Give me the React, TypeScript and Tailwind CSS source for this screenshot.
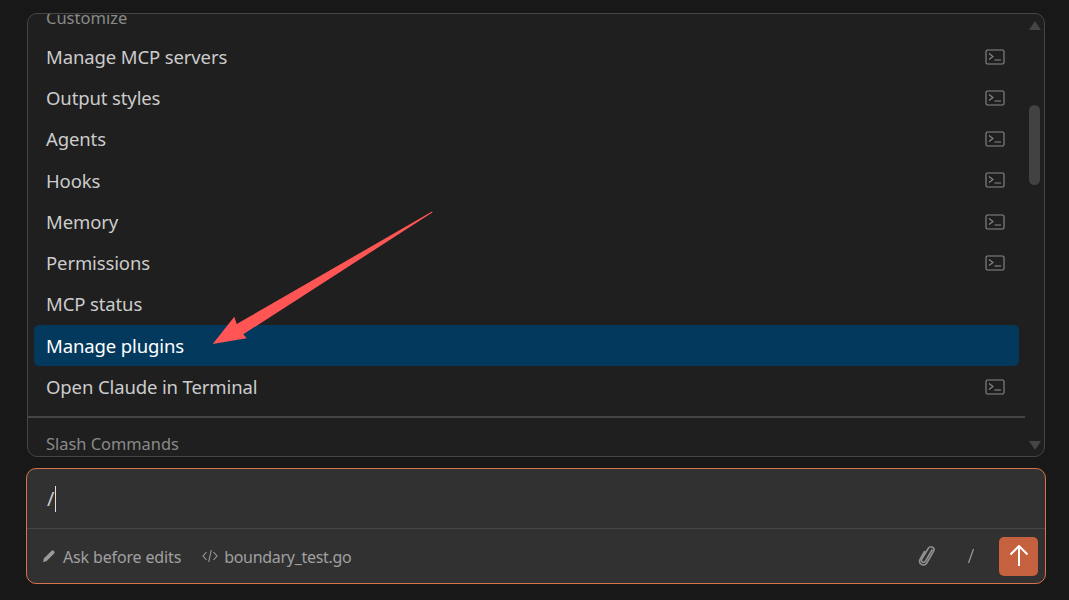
const items = [
  { label: "Manage MCP servers", icon: true },
  { label: "Output styles", icon: true },
  { label: "Agents", icon: true },
  { label: "Hooks", icon: true },
  { label: "Memory", icon: true },
  { label: "Permissions", icon: true },
  { label: "MCP status", icon: false },
  { label: "Manage plugins", icon: false, active: true },
  { label: "Open Claude in Terminal", icon: true },
];

function TerminalIcon() {
  return (
    <svg className="-mt-px" width="20" height="16" viewBox="0 0 20 16" fill="none" stroke="#8a8a8a" strokeWidth="1.1">
      <rect x="1" y="1" width="18" height="14" rx="1.5" />
      <path d="M4 4.5 L8 7.5 L4 10.5" />
      <path d="M9.5 11 H16" />
    </svg>
  );
}

export default function App() {
  return (
    <div className="relative h-[600px] w-[1069px] overflow-hidden bg-[#181818] font-['Noto_Sans',sans-serif] pt-[13px] pl-[27px]">
      <div className="relative h-[444px] w-[1018px] overflow-hidden rounded-[10px] border border-[#454545] bg-[#1f1f1f]">
        <div className="-mt-[9px] pl-[18px] text-[16.5px] leading-[26px] text-[#8a8a8a]">Customize</div>
        <div className="mt-[5.6px] ml-[6px] w-[985px]">
          {items.map((item) => (
            <div
              key={item.label}
              className={
                item.active
                  ? "mb-[0.25px] flex h-[41px] items-center justify-between rounded-[5px] bg-[#04395e] pl-3 pr-[14px] text-[18.5px] tracking-[-0.12px] text-white"
                  : "flex h-[41.25px] items-center justify-between pl-3 pr-[14px] text-[18.5px] tracking-[-0.12px] text-[#cccccc]"
              }
            >
              <span className={item.active ? "" : "-mt-px"}>{item.label}</span>
              {item.icon && <TerminalIcon />}
            </div>
          ))}
        </div>
        <div className="mt-[8px] h-[2px] w-[997px] bg-[#454545]" />
        <div className="mt-[13px] pl-[18px] text-[16.4px] leading-[26px] text-[#8a8a8a]">Slash Commands</div>
        <div className="absolute right-[3px] top-[7px] h-0 w-0 border-x-[6.5px] border-b-[9px] border-x-transparent border-b-[#454545]" />
        <div className="absolute right-[4px] top-[91px] h-[80px] w-[11px] rounded-full bg-[#424242]" />
        <div className="absolute right-[3px] bottom-[6px] h-0 w-0 border-x-[6.5px] border-t-[9px] border-x-transparent border-t-[#454545]" />
      </div>

      <div className="mt-[11px] -ml-px h-[116px] w-[1020px] rounded-[10px] border border-[#d9734e] bg-[#313131]">
        <div className="flex h-[60px] items-center border-b border-[#484848] pl-[20px]">
          <span className="text-[20px] text-[#cccccc]">/</span>
          <span className="ml-px h-[26px] w-px bg-[#e0e0e0]" />
        </div>
        <div className="flex h-[54px] items-center justify-between pl-[15px] pr-[7px]">
          <div className="flex items-center text-[16px] text-[#a0a0a0]">
            <svg width="14" height="14" viewBox="0 0 14 14" fill="#9a9a9a">
              <path d="M1 13 L1.8 9.6 L9.6 1.8 Q10.6 0.9 11.6 1.8 L12.3 2.5 Q13.1 3.5 12.2 4.4 L4.4 12.2 Z" />
            </svg>
            <span className="mt-[1px] ml-[7px] tracking-[-0.15px]">Ask before edits</span>
            <svg className="ml-[21px]" width="16" height="14" viewBox="0 0 16 14" fill="none" stroke="#9a9a9a" strokeWidth="1.1">
              <path d="M4.5 3 L1 7 L4.5 11" />
              <path d="M11.5 3 L15 7 L11.5 11" />
              <path d="M9.3 1 L6.7 13" />
            </svg>
            <span className="mt-[1px] ml-[6px] tracking-[-0.3px]">boundary_test.go</span>
          </div>
          <div className="flex items-center">
            <svg width="18" height="22" viewBox="0 0 18 22" fill="none" stroke="#8f8f8f" strokeWidth="1.6" strokeLinecap="round">
              <path d="M14 5 L7.5 16 Q6.3 18 4.5 17 Q2.8 16 3.8 14 L10.5 3 Q12 1 14.5 2.2 Q17 3.7 15.6 6.2 L8.8 18 Q7 21 3.8 19.6 Q0.4 17.8 2 14.4 L6.5 6.5" />
            </svg>
            <svg className="ml-[31px]" width="8" height="16" viewBox="0 0 8 16" fill="none" stroke="#9a9a9a" strokeWidth="1.2">
              <path d="M6.5 1 L1.5 15" />
            </svg>
            <div className="ml-[24px] flex h-[39px] w-[39px] items-center justify-center rounded-[5px] bg-[#c6613f]">
              <svg width="22" height="22" viewBox="0 0 22 22" fill="none" stroke="#ffffff" strokeWidth="2">
                <path d="M11 1 V21" />
                <path d="M2.5 9.5 L11 1 L19.5 9.5" />
              </svg>
            </div>
          </div>
        </div>
      </div>

      <svg className="absolute left-0 top-0" width="1069" height="600" viewBox="0 0 1069 600">
        <polygon points="432.7,212.3 243.3,334.3 246.7,338.3 212.7,344 234.3,316.7 236.7,324 432,211.5" fill="#ff5555" />
      </svg>
    </div>
  );
}
